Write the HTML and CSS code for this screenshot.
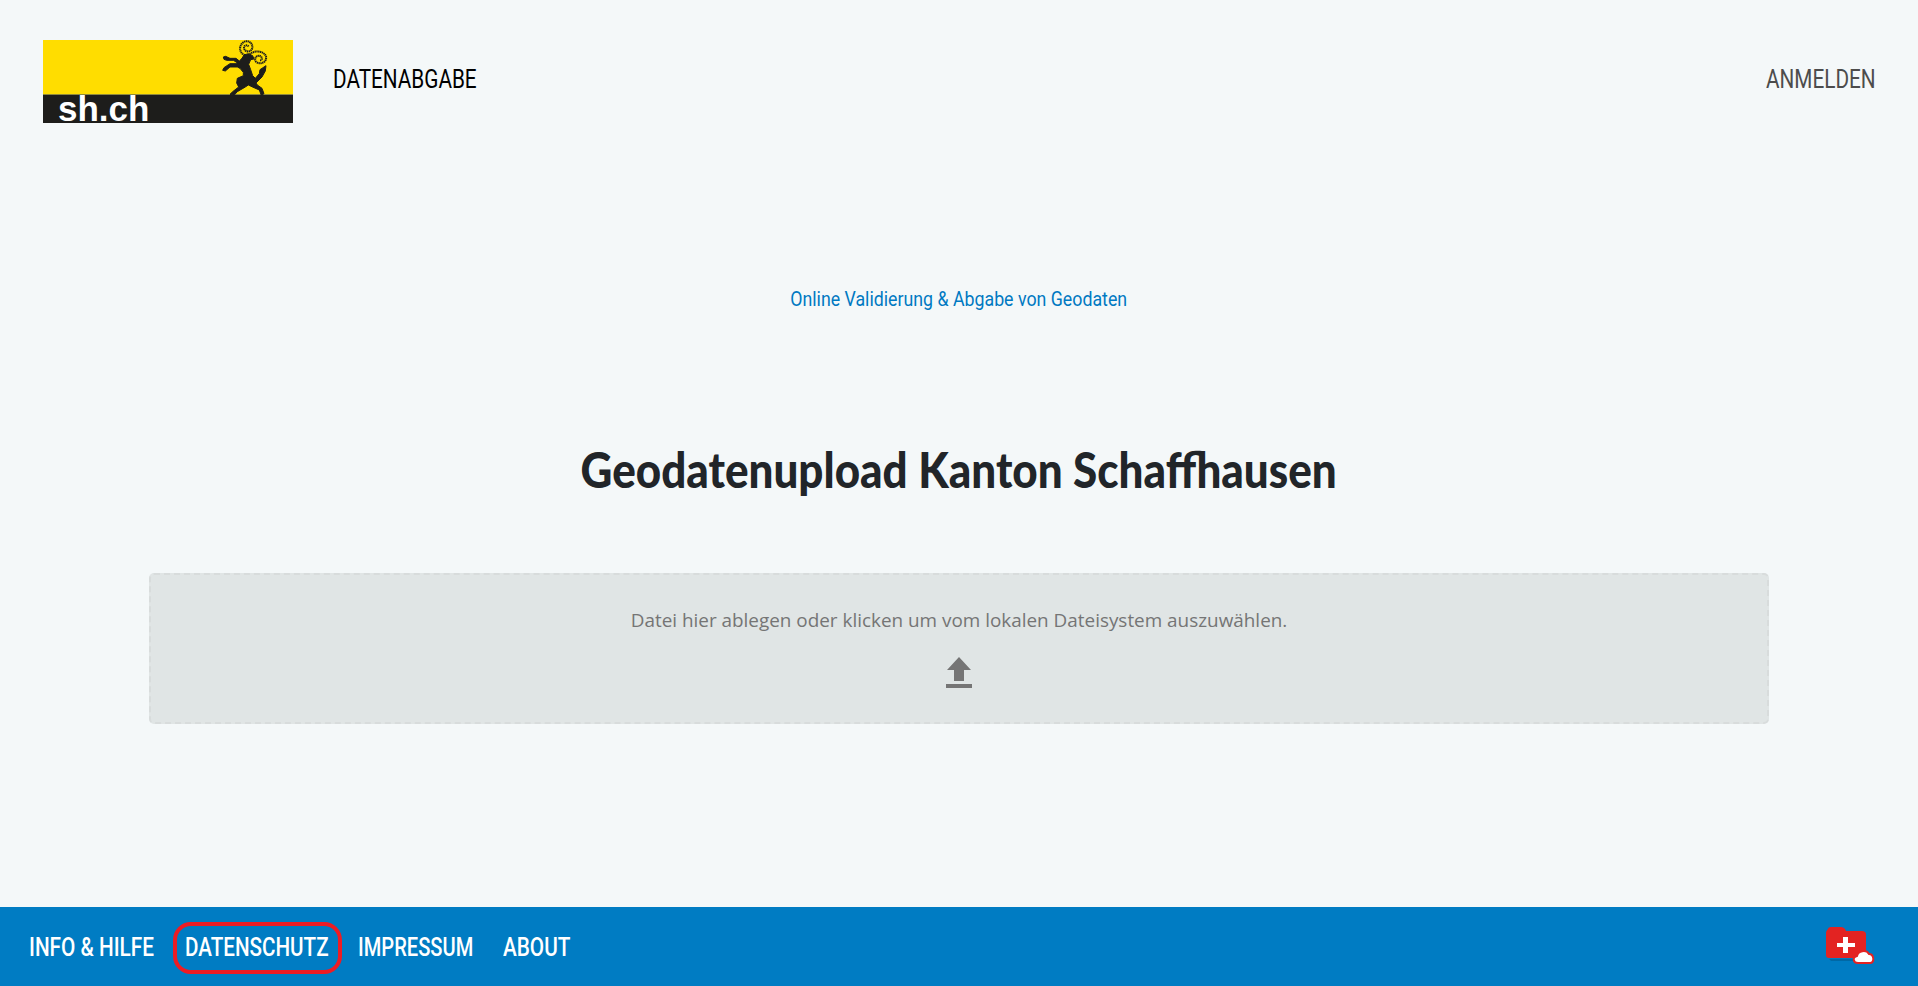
FILE: index.html
```html
<!DOCTYPE html>
<html lang="de">
<head>
    <meta charset="UTF-8">
    <meta name="viewport" content="width=device-width, initial-scale=1.0">
    <title>Geodatenupload Kanton Schaffhausen</title>
    <link rel="stylesheet" href="styles.css">
</head>
<body>

<header class="topbar">
    <a class="logo" href="#">
        <svg width="250" height="83" viewBox="0 0 250 83">
            <rect width="250" height="83" fill="#ffdd00"/>
            <rect y="55" width="250" height="28" fill="#1d1d1b"/>
            <rect y="54" width="250" height="1" fill="#8f8a3c"/>
            <text class="logo-text" x="15" y="81">sh.ch</text>
            <g transform="translate(137,-5) scale(0.3333)">
                <path d="M200 62 C178 58 174 34 190 22 C204 12 222 26 216 42 C210 54 192 50 192 38 C192 30 204 28 206 36" fill="none" stroke="#1d1d1b" stroke-width="6" stroke-dasharray="4 1.5"/>
                <path d="M205 62 C220 44 250 46 258 64 C262 80 242 92 228 80 C220 70 232 58 242 64 C248 68 246 76 240 76" fill="none" stroke="#1d1d1b" stroke-width="6" stroke-dasharray="4 1.5"/>
                <path fill="#1d1d1b" stroke="#1d1d1b" stroke-width="3" d="M130 66 L137 64 L150 70 L168 70 L178 78 L186 70 L192 60 L205 56 L218 62 L222 72 L212 74 L206 88 L212 104 L218 122 L226 130 L238 116 L240 104 L258 92 L256 108 L246 126 L228 144 L232 150 L246 160 L252 176 L244 181 L238 165 L222 158 L205 150 L196 156 L172 170 L162 181 L150 178 L158 170 L176 156 L170 144 L172 130 L190 122 L190 112 L180 100 L172 96 L150 96 L136 108 L128 106 L132 98 L150 86 L170 86 L170 82 L160 76 L140 76 L132 73 Z"/>
            </g>
        </svg>
    </a>
    <a class="nav-title" href="#"><span class="narrow">DATENABGABE</span></a>
    <a class="login" href="#"><span class="narrow">ANMELDEN</span></a>
</header>

<main class="content">
    <p class="subtitle">Online Validierung &amp; Abgabe von Geodaten</p>
    <h1>Geodatenupload Kanton Schaffhausen</h1>
    <div class="dropzone">
        <p>Datei hier ablegen oder klicken um vom lokalen Dateisystem auszuwählen.</p>
        <svg class="upload-icon" width="28" height="33" viewBox="0 0 28 33">
            <path fill="#757575" d="M14 0 L26 13 L19 13 L19 24 L9 24 L9 13 L2 13 Z"/>
            <rect x="1" y="27" width="26" height="4" fill="#757575"/>
        </svg>
    </div>
</main>

<footer class="footer">
    <nav class="footer-nav">
        <a class="link-info" href="#"><span class="narrow">INFO &amp; HILFE</span></a>
        <a class="link-privacy marked" href="#"><span class="narrow">DATENSCHUTZ</span></a>
        <a class="link-imprint" href="#"><span class="narrow">IMPRESSUM</span></a>
        <a class="link-about" href="#"><span class="narrow">ABOUT</span></a>
    </nav>
    <svg class="footer-icon" width="50" height="40" viewBox="0 0 50 40">
        <path fill="#0068a5" d="M4 32 H34 V34 H6 Z"/>
        <path fill="#e32322" d="M3 2 C3 1 4 0 6 0 H16 C18 0 20 1 21 4 H37 C39 4 41 5 41 7 V28 C41 30 39 31 37 31 H4 C2 31 1 30 1 28 V6 C1 4 2 3 3 2 Z"/>
        <path fill="#fff" d="M18 10 H23 V16 H30 V20 H23 V26 H18 V20 H12 V16 H18 Z"/>
        <path fill="#fff" stroke="#e32322" stroke-width="2" d="M33 36 C28 36 27 30 32 29 C33 24 41 22 44 27 C49 27 50 36 45 36 Z"/>
    </svg>
</footer>

</body>
</html>
```

FILE: styles.css
```css
* {
    box-sizing: border-box;
}
html, body {
    height: 100%;
}
body {
    margin: 0;
    display: flex;
    flex-direction: column;
    overflow: hidden;
    background-color: #f4f8f9;
    color: #212529;
    font-family: 'Roboto', 'Liberation Sans', sans-serif;
}
a {
    color: inherit;
    text-decoration: none;
}
/* no condensed font here, so squeeze the text sideways */
.narrow {
    display: inline-block;
    white-space: nowrap;
    transform-origin: left center;
    transform: scaleX(0.83);
}
.topbar {
    display: flex;
    align-items: center;
    padding: 40px 43px 0;
    height: 123px;
    flex-shrink: 0;
}
.logo {
    display: block;
    height: 83px;
}
.logo svg {
    display: block;
    overflow: visible;
}
.logo-text {
    font-family: 'Liberation Sans', sans-serif;
    font-weight: 700;
    font-size: 35px;
    fill: #fff;
}
.nav-title, .login {
    font-size: 25px;
    line-height: 30px;
    margin-bottom: 4px;
}
.nav-title {
    margin-left: 40px;
    width: 143px;
    color: #000;
}
.login {
    margin-left: auto;
    width: 109px;
    color: #4c4c4c;
}
.content {
    flex: 1;
    display: flex;
    flex-direction: column;
    align-items: center;
    padding: 0 149px;
}
.subtitle {
    margin: 164px 0 0;
    font-size: 20px;
    line-height: 24px;
    color: #0079c2;
    transform: scaleX(0.888);
}
h1 {
    margin: 128px 0 0;
    font-family: 'Lato', sans-serif;
    font-size: 50px;
    line-height: 60px;
    font-weight: 900;
    white-space: nowrap;
    transform: scaleX(0.88);
}
.dropzone {
    margin-top: 74px;
    width: 100%;
    height: 151px;
    display: flex;
    flex-direction: column;
    align-items: center;
    background-color: #e0e5e5;
    border: 2px dashed #d8dcdc;
    border-radius: 5px;
    color: #757575;
}
.dropzone p {
    margin: 32px 0 0;
    font-family: 'Open Sans', sans-serif;
    font-size: 18.9px;
    line-height: 26px;
}
.upload-icon {
    margin-top: 24px;
}
.footer {
    flex-shrink: 0;
    height: 79px;
    display: flex;
    align-items: center;
    justify-content: space-between;
    padding: 3px 43px 0 29px;
    background-color: #007cc3;
}
.footer-icon {
    margin-top: -3px;
}
.footer-nav {
    display: flex;
    align-items: center;
    gap: 30px;
}
.footer-nav a {
    font-size: 25px;
    line-height: 30px;
    font-weight: 500;
    color: #fff;
}
.link-info { width: 126px; }
.link-privacy { width: 143px; }
.link-imprint { width: 115px; }
.link-about { width: 66px; }
.link-privacy .narrow {
    transform: scaleX(0.825);
}
.link-imprint .narrow {
    transform: scaleX(0.805);
}
.footer-nav .marked {
    width: 161px;
    margin: 0 -10px 0 -8px;
    padding: 7px 8px;
    outline: 4px solid #ed1c24;
    border-radius: 14px;
}
```
